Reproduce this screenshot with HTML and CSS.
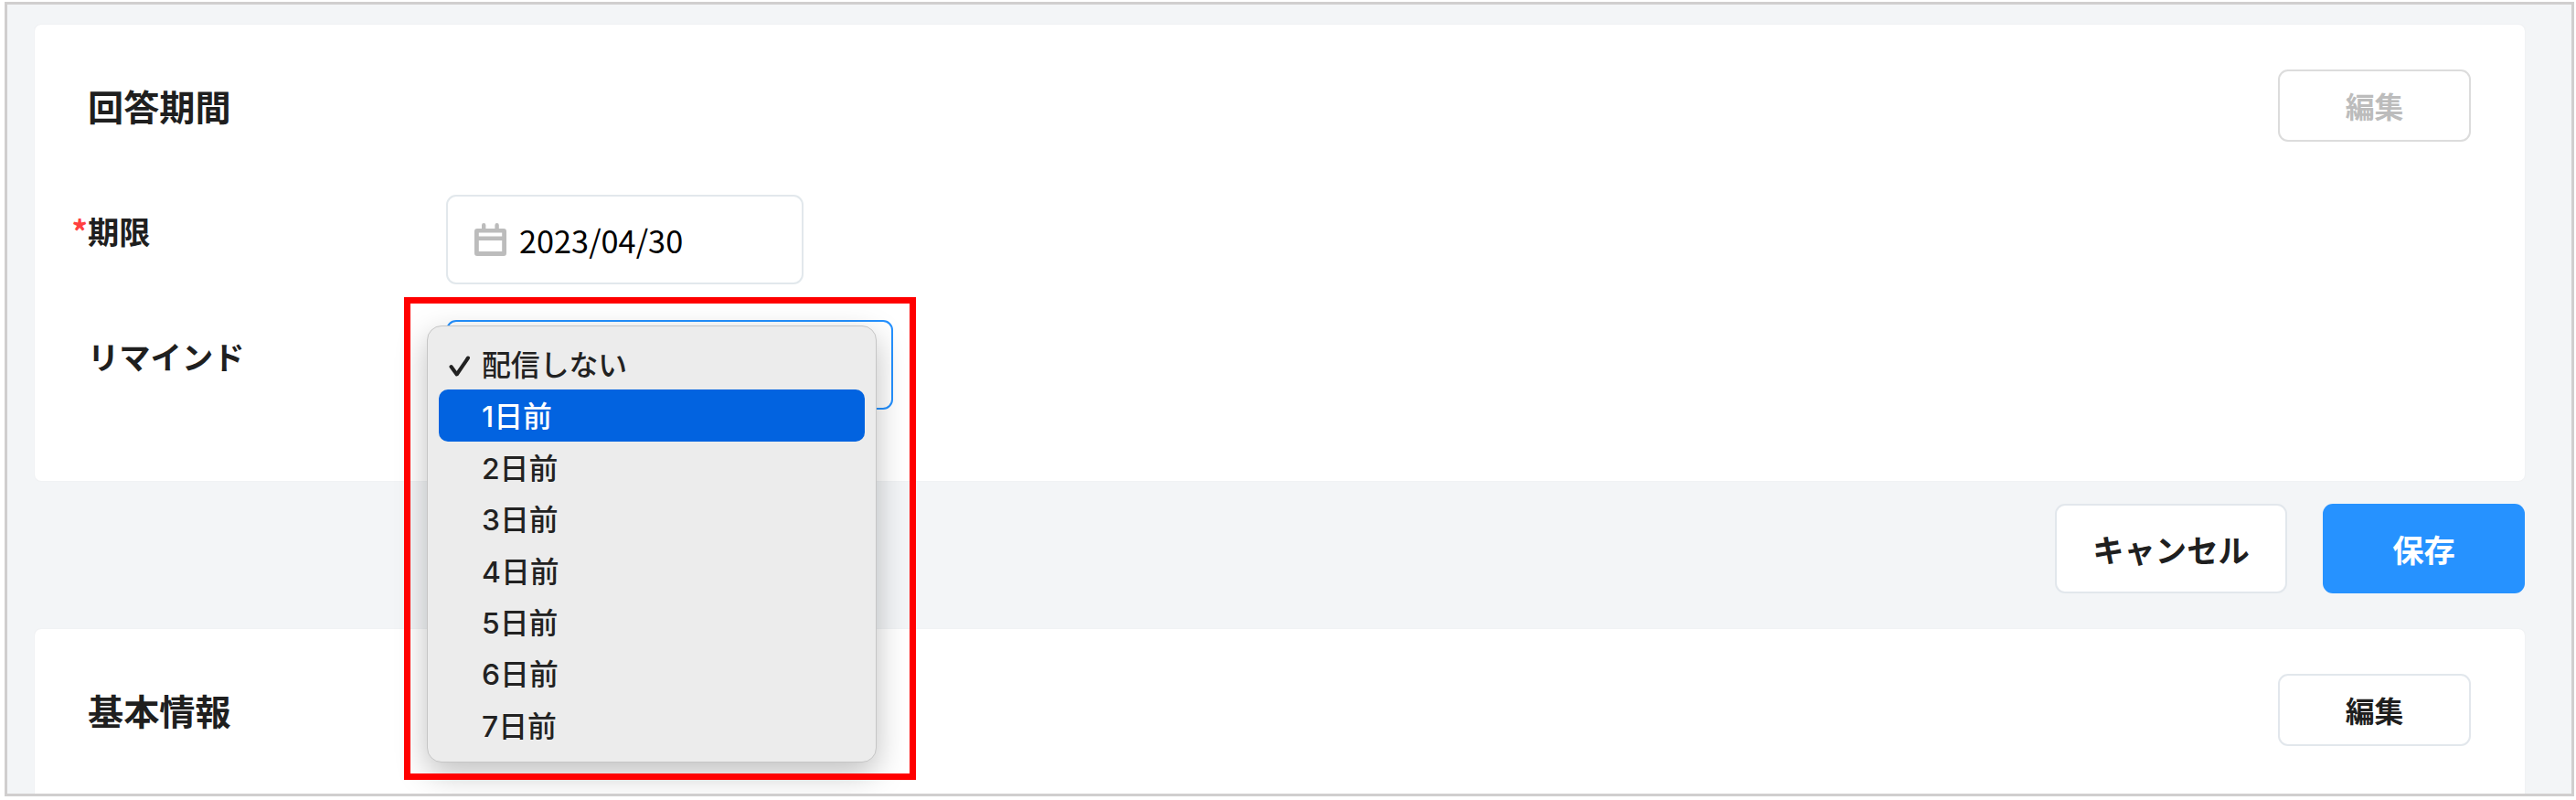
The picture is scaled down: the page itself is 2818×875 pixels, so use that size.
FILE: index.html
```html
<!DOCTYPE html>
<html lang="ja">
<head>
<meta charset="utf-8">
<title>回答期間</title>
<link rel="stylesheet" href="styles.css">
</head>
<body>
<main class="frame">
  <section class="card card-period">
    <header class="card-head">
      <h2 class="title">回答期間</h2>
      <button class="btn btn-edit" disabled>編集</button>
    </header>
    <div class="row row-deadline">
      <label class="label"><span class="required">*</span>期限</label>
      <div class="date-input">
        <svg class="calendar" viewBox="0 0 36 36" fill="#bcbcbc"><path fill-rule="evenodd" d="M8 2.200a2.200 2.200 0 0 1 4.400 0V6h10V2.200a2.200 2.200 0 0 1 4.400 0V6H32a3 3 0 0 1 3 3v24a3 3 0 0 1-3 3H3a3 3 0 0 1-3-3V9a3 3 0 0 1 3-3h5zM4.800 10.500v4h25.400v-4zM4.800 19v12h25.400V19z"/></svg>
        <span class="date">2023/04/30</span>
      </div>
    </div>
    <div class="row row-remind">
      <label class="label">リマインド</label>
      <div class="select">
        <ul class="menu">
          <li class="option"><svg class="check" viewBox="0 0 24 24"><path d="M2.500 12l6.200 8.500L21 2.500" fill="none" stroke="#222" stroke-width="4" stroke-linecap="round" stroke-linejoin="round"/></svg>配信しない</li>
          <li class="option active">1日前</li>
          <li class="option">2日前</li>
          <li class="option">3日前</li>
          <li class="option">4日前</li>
          <li class="option">5日前</li>
          <li class="option">6日前</li>
          <li class="option">7日前</li>
        </ul>
      </div>
    </div>
  </section>
  <div class="actions">
    <button class="btn btn-cancel">キャンセル</button>
    <button class="btn btn-save">保存</button>
  </div>
  <section class="card card-basic">
    <header class="card-head">
      <h2 class="title">基本情報</h2>
      <button class="btn btn-edit">編集</button>
    </header>
  </section>
</main>
<div class="highlight"></div>
</body>
</html>
```
FILE: styles.css
```css
* { box-sizing: border-box; }
body {
  margin: 0;
  padding: 2px 2px 0 5px;
  height: 875px;
  overflow: hidden;
  background: #fff;
  color: #1f1f1f;
  font-family: "Noto Sans CJK JP", sans-serif;
}
.frame {
  width: 2811px;
  height: 869px;
  border: 3px solid #d0cece;
  background: #f3f5f7;
  padding: 22px 51px 0 30px;
  overflow: hidden;
}
.card {
  background: #fff;
  border-radius: 7px;
  box-shadow: 0 0 2px rgba(0, 0, 0, .06);
  padding: 49px 59px 0 58px;
}
.card-period { height: 499px; }
.card-basic { height: 220px; }
.card-head { display: flex; justify-content: space-between; height: 79px; }
.title { margin: 10px 0 0; font-size: 39.2px; line-height: 58px; font-weight: 700; }
.btn {
  font: 700 34.3px/1 "Noto Sans CJK JP", sans-serif;
  color: #1f1f1f;
  background: #fff;
  border: 2px solid #e2e7ec;
  border-radius: 11px;
  padding: 0;
}
.btn-edit { width: 211px; height: 79px; font-size: 31.85px; }
.btn-edit:disabled { color: #bcbcbc; border-color: #dcdcdc; }
.row { display: flex; }
.row-deadline { margin-top: 58px; height: 137px; }
.label { position: relative; width: 392px; font-size: 34.3px; line-height: 50px; font-weight: 700; padding-top: 14px; }
.required { position: absolute; right: 100%; color: #ff4040; font-weight: 700; }
.date-input {
  width: 391px;
  height: 98px;
  border: 2px solid #e2e8ec;
  border-radius: 11px;
  padding: 0 0 0 29px;
  display: flex;
  align-items: center;
  gap: 13px;
}
.calendar { width: 36px; height: 36px; }
.date { font-size: 34.3px; color: #000; line-height: 50px; }
.select { position: relative; width: 489px; height: 98px; border: 2px solid #2491ff; border-radius: 11px; }
.menu {
  position: absolute;
  z-index: 1;
  top: 4px;
  left: -23px;
  width: 492px;
  height: 478px;
  margin: 0;
  padding: 13px 12px 12px;
  list-style: none;
  background: #ececec;
  border: 1px solid #c6c6c6;
  border-radius: 16px;
  box-shadow: 0 12px 34px rgba(0, 0, 0, .25);
}
.option {
  position: relative;
  height: 56.400px;
  padding-left: 47px;
  padding-top: 2px;
  border-radius: 10px;
  font: 450 31.85px/56.400px Inter, "Noto Sans CJK JP", sans-serif;
  color: #222;
}
.option.active { background: #0263e0; color: #fff; }
.check { position: absolute; left: 11px; top: 19px; width: 24px; height: 24px; }
.actions { height: 162px; padding-top: 25px; display: flex; justify-content: flex-end; gap: 39px; }
.btn-cancel { width: 254px; height: 98px; }
.btn-save { width: 221px; height: 98px; background: #2692ff; color: #fff; border: 0; }
.highlight { position: absolute; z-index: 2; left: 442px; top: 325px; width: 560px; height: 528px; border: 7px solid #f00; }
```
